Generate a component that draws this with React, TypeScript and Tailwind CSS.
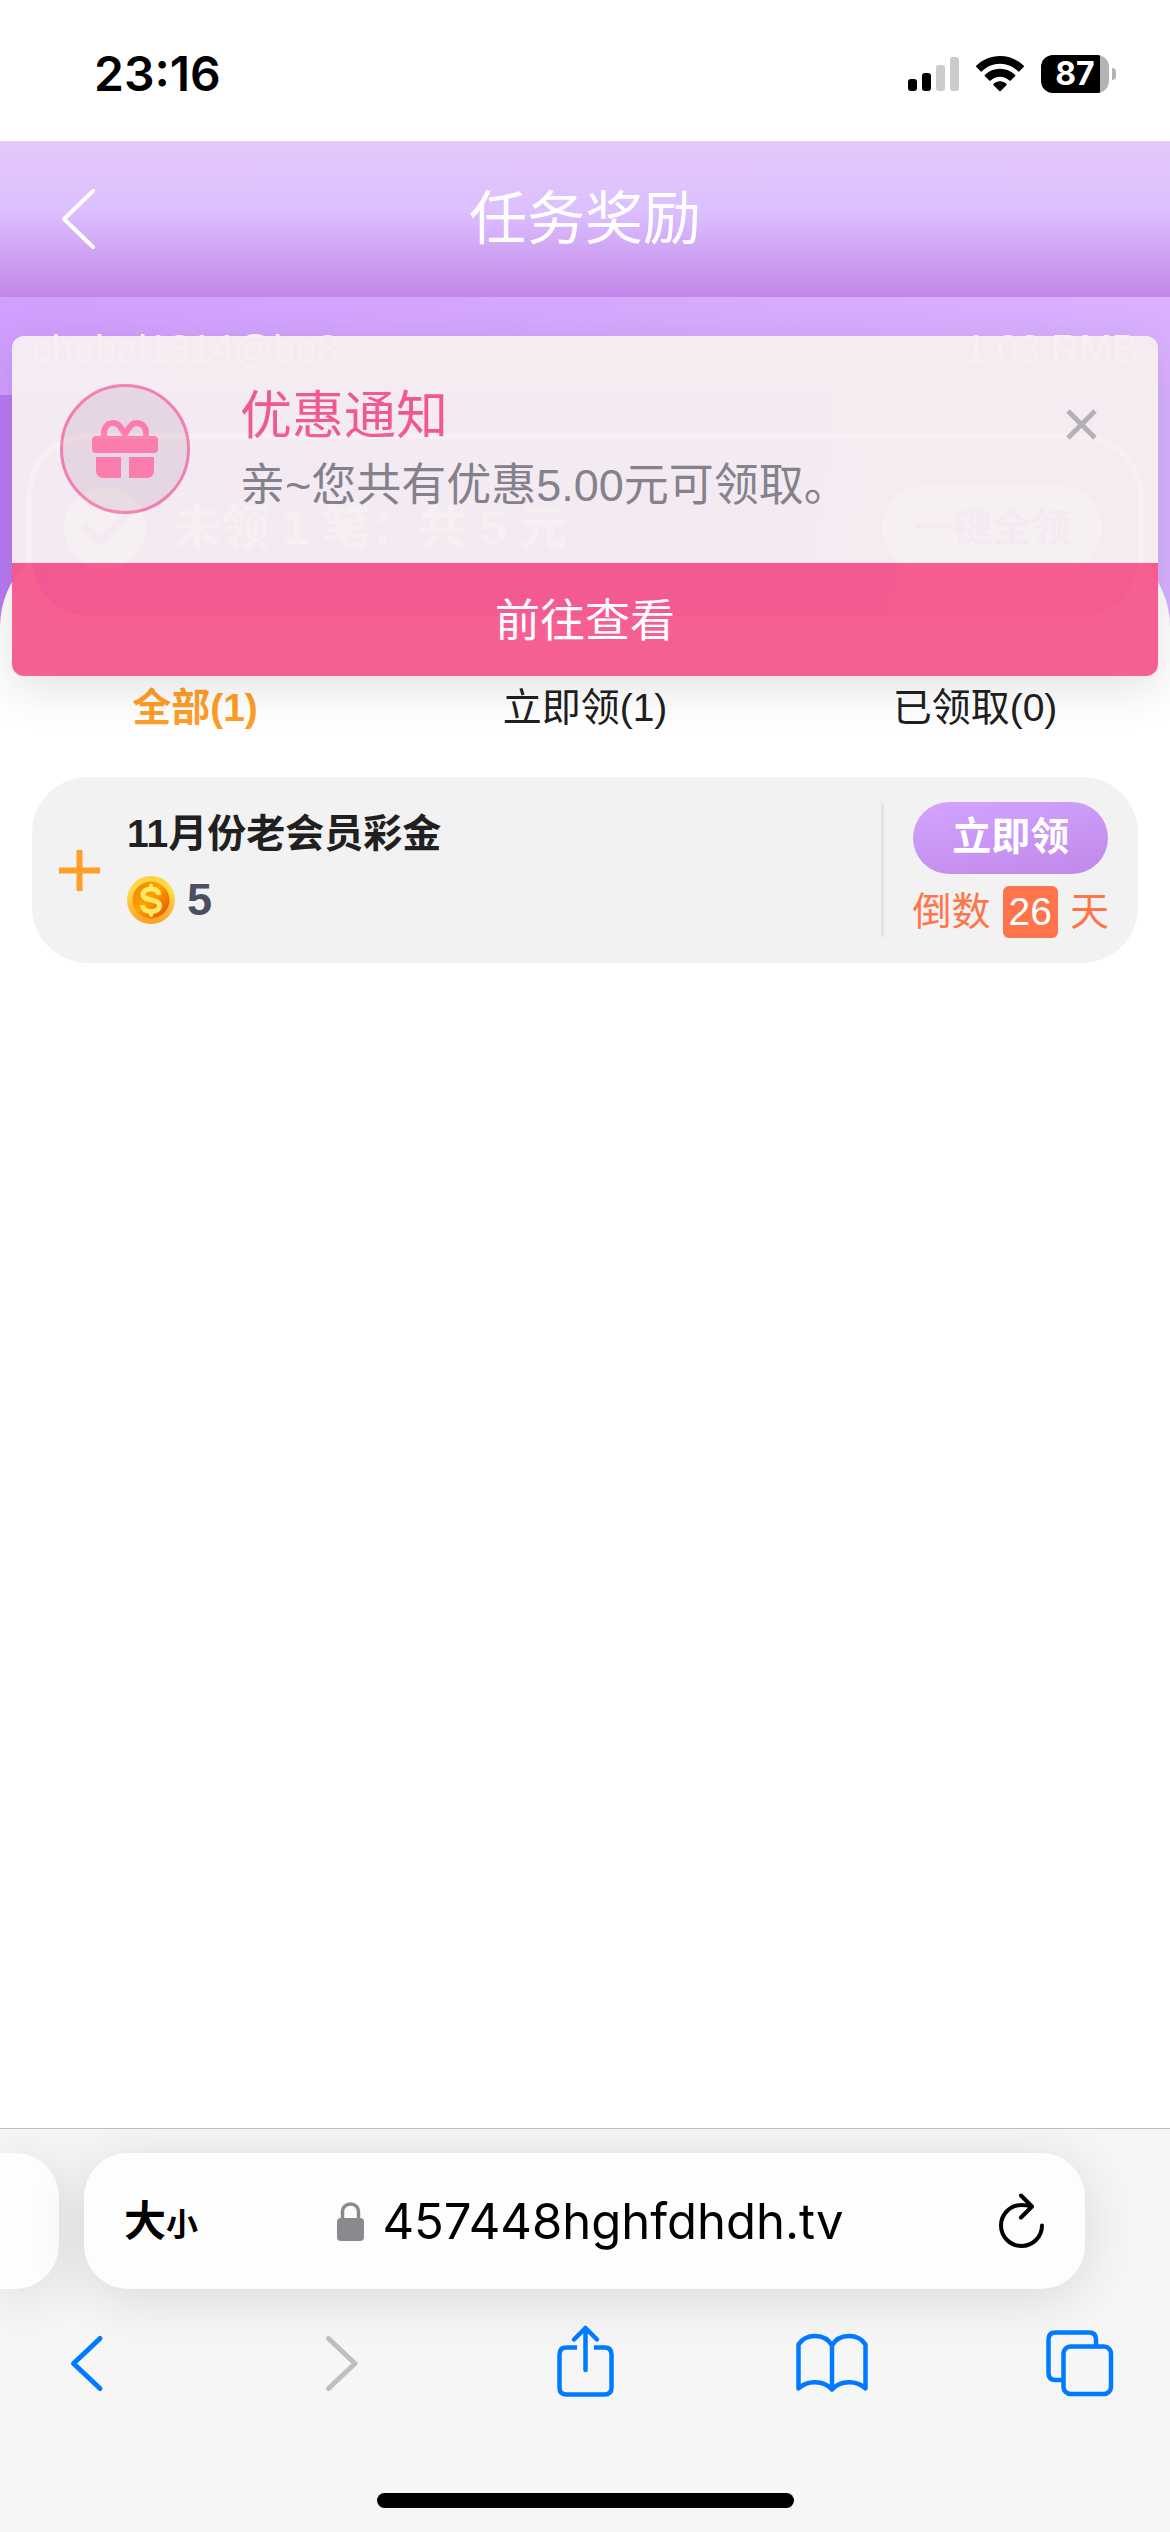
import { useState } from 'react'

type TabKey = 'all' | 'pending' | 'claimed'

const tabs: { key: TabKey; label: string }[] = [
  { key: 'all', label: '全部(1)' },
  { key: 'pending', label: '立即领(1)' },
  { key: 'claimed', label: '已领取(0)' },
]

const rewards = [{ id: 1, title: '11月份老会员彩金', amount: 5, daysLeft: 26, claimed: false }]

function StatusBar() {
  return (
    <div className="flex h-[141px] items-start justify-between bg-white pt-[46px] pr-[54px] pl-[94px]">
      <span className="font-[Inter,sans-serif] text-5xl leading-[56px] font-semibold text-black">23:16</span>
      <div className="flex h-14 items-center gap-[17px]">
        <svg width="51" height="36" viewBox="0 0 51 36" aria-hidden="true">
          <rect x="0" y="23" width="9" height="12" rx="3" />
          <rect x="14" y="17" width="9" height="18" rx="3" />
          <rect x="28" y="9" width="9" height="26" rx="3" fill="#cbcbcb" />
          <rect x="42" y="1" width="9" height="34" rx="3" fill="#cbcbcb" />
        </svg>
        <svg width="48" height="36" viewBox="0 0 48 36" aria-hidden="true">
          <path d="M24 0C14.800 0 6.500 3.600.4 9.600a1 1 0 0 0 0 1.500l4.200 4.200a1 1 0 0 0 1.400 0C10.700 10.700 17 7.800 24 7.800s13.300 2.900 18 7.500a1 1 0 0 0 1.400 0l4.200-4.200a1 1 0 0 0 0-1.500C41.500 3.600 33.200 0 24 0z" />
          <path d="M24 12.700c-5.800 0-11 2.300-15 6a1 1 0 0 0 0 1.500l4.300 4.200a1 1 0 0 0 1.400 0c2.400-2.300 5.700-3.700 9.300-3.700s6.900 1.400 9.300 3.700a1 1 0 0 0 1.400 0l4.300-4.200a1 1 0 0 0 0-1.500c-4-3.700-9.200-6-15-6z" />
          <path d="M24 25.300c-2.500 0-4.700.9-6.400 2.400a1 1 0 0 0 0 1.500l5.700 5.800a1 1 0 0 0 1.400 0l5.700-5.800a1 1 0 0 0 0-1.500c-1.700-1.500-3.900-2.400-6.400-2.400z" />
        </svg>
        <div className="flex items-center gap-[3px]">
          <span className="flex h-[38px] w-[68px] items-center justify-center rounded-xl bg-[linear-gradient(to_right,#000_87%,#b3b3b3_87%)] font-[Inter,sans-serif] text-[32px] leading-none font-bold text-white">
            87
          </span>
          <span className="h-3 w-1 rounded-r-full bg-[#b3b3b3]" />
        </div>
      </div>
    </div>
  )
}

function PageHeader() {
  return (
    <header className="grid h-[156px] grid-cols-[160px_1fr_160px] items-center bg-[linear-gradient(to_bottom,#e4c9fa,#dcbfff_45%,#c286e8)] text-white">
      <button type="button" aria-label="返回" className="flex h-full items-center pl-[61px]">
        <svg width="34" height="60" viewBox="0 0 34 60" fill="none" stroke="currentColor" strokeWidth="4" strokeLinecap="round" strokeLinejoin="round">
          <path d="M32 2 3 30l29 28" />
        </svg>
      </button>
      <h1 className="text-center text-[58px] leading-none">任务奖励</h1>
    </header>
  )
}

function ClaimAllCard() {
  return (
    <div className="relative z-10 mx-[26px] flex h-[189px] items-center justify-between rounded-[64px] border-6 border-white bg-[linear-gradient(100deg,#b97cf3,#d8b2ff)] pr-9 pl-8">
      <div className="flex items-center gap-[27px] text-white">
        <svg width="82" height="82" viewBox="0 0 82 82" aria-hidden="true">
          <circle cx="41" cy="41" r="41" fill="#fff" />
          <path d="M19 37l17 17 28-28" fill="none" stroke="#bd83f4" strokeWidth="7" />
        </svg>
        <p className="text-5xl leading-none font-bold">未领 1 笔：共 5 元</p>
      </div>
      <button type="button" className="h-[83px] w-[220px] rounded-full bg-white text-[39px] leading-none font-bold text-[#c08bf0]">
        一键全领
      </button>
    </div>
  )
}

function NoticeToast({ onClose }: { onClose: () => void }) {
  return (
    <section className="absolute inset-x-3 top-[39px] z-20 overflow-hidden rounded-xl opacity-95 shadow-[0_12px_48px_rgba(0,0,0,0.12)]">
      <div className="flex h-[227px] items-start bg-[#f7f0f2] pt-12 pr-[53px] pl-12">
        <div className="flex size-[130px] shrink-0 items-center justify-center rounded-full border-3 border-[#f57fae] bg-[#e9dae2] text-[#fe7dab]">
          <svg width="66" height="58" viewBox="0 0 66 58" fill="currentColor" aria-hidden="true">
            <path d="M12 17v-4c0-6 4-10 9-10 6 0 8 5 12 11 4-6 6-11 12-11 5 0 9 4 9 10v4" fill="none" stroke="currentColor" strokeWidth="6" />
            <rect x="0" y="16" width="66" height="17" rx="4" />
            <path d="M4 37h25v21H11a7 7 0 0 1-7-7z" />
            <path d="M37 37h25v14a7 7 0 0 1-7 7H37z" />
          </svg>
        </div>
        <div className="flex-1 pt-[2px] pl-[50px]">
          <h2 className="text-[52px] leading-[60px] text-[#f2568c]">优惠通知</h2>
          <p className="pt-2 text-[45px] leading-[64px] text-[#828187]">亲~您共有优惠5.00元可领取。</p>
        </div>
        <button type="button" aria-label="关闭" onClick={onClose} className="p-2 pt-[25px] text-[#b3b1b3]">
          <svg width="31" height="31" viewBox="0 0 31 31" stroke="currentColor" strokeWidth="5">
            <path d="M2 2l27 27M29 2 2 29" />
          </svg>
        </button>
      </div>
      <button type="button" className="block h-[113px] w-full bg-[#f5578c] pt-1 text-[45px] leading-none text-white">
        前往查看
      </button>
    </section>
  )
}

function Coin() {
  return (
    <svg width="48" height="48" viewBox="0 0 48 48" aria-hidden="true">
      <defs>
        <linearGradient id="rim" x1="0" y1="0" x2="0" y2="1">
          <stop offset="0" stopColor="#ffcf3a" />
          <stop offset=".3" stopColor="#ffdf4a" />
          <stop offset="1" stopColor="#ff9d28" />
        </linearGradient>
        <linearGradient id="face" x1=".1" y1=".2" x2=".9" y2=".9">
          <stop offset="0" stopColor="#f18c00" />
          <stop offset=".4" stopColor="#ffa300" />
          <stop offset="1" stopColor="#e65c00" />
        </linearGradient>
      </defs>
      <circle cx="24" cy="24" r="24" fill="url(#rim)" />
      <circle cx="24" cy="24" r="18.500" fill="url(#face)" />
      <path d="M32 19c-.5-4-3.500-6-8-6-4.700 0-8 2.200-8 5.600 0 7.400 16.500 3.200 16.500 11 0 3.600-3.500 5.900-8.200 5.900-5 0-8.300-2.300-8.800-6.500" fill="none" stroke="#ffe866" strokeWidth="5" />
      <path d="M24 9.500V13M24 35.500V39" fill="none" stroke="#ffe866" strokeWidth="4" strokeLinecap="round" />
    </svg>
  )
}

function RewardItem({ title, amount, daysLeft }: { title: string; amount: number; daysLeft: number }) {
  return (
    <li className="flex h-[186px] items-center rounded-[56px] bg-[#f2f2f2] pr-[29px] pl-[27px]">
      <button type="button" aria-label="展开" className="mr-[27px] text-[#ff9e28]">
        <svg width="41" height="41" viewBox="0 0 41 41" stroke="currentColor" strokeWidth="6">
          <path d="M0 20.500h41M20.500 0v41" />
        </svg>
      </button>
      <div className="flex-1 pb-2">
        <h3 className="text-[39px] leading-[56px] font-bold text-[#202020]">{title}</h3>
        <div className="flex items-center gap-3 pt-3">
          <Coin />
          <span className="text-[45px] leading-[52px] font-bold text-[#495061]">{amount}</span>
        </div>
      </div>
      <div className="flex items-center gap-[29px]">
        <span className="h-[134px] w-[3px] bg-[#e4e4e4]" />
        <div className="flex flex-col items-center gap-3">
          <button type="button" className="h-[72px] w-[195px] rounded-full bg-[linear-gradient(170deg,#d3a4ff,#c088ea)] pb-1 text-[39px] leading-none font-bold text-white">
            立即领
          </button>
          <p className="flex items-center gap-3 text-[39px] leading-[52px] whitespace-nowrap text-[#ff7549]">
            倒数
            <span className="rounded-md bg-[#ff744b] px-[6px] text-white">{daysLeft}</span>
            天
          </p>
        </div>
      </div>
    </li>
  )
}

function BrowserBar() {
  return (
    <footer className="relative z-10 mt-auto overflow-hidden border-t border-[#bdbdbd] bg-[#f6f6f6] pt-6">
      <div className="flex h-[136px] gap-[25px] pr-[85px]">
        <div className="w-[59px] rounded-r-[44px] bg-[#fdfdfd] shadow-[0_8px_56px_rgba(0,0,0,0.12)]" />
        <div className="flex flex-1 items-center rounded-[44px] bg-[#fdfdfd] px-10 font-[Inter,'Noto_Sans_CJK_SC',sans-serif] text-black shadow-[0_8px_56px_rgba(0,0,0,0.12)]">
          <button type="button" className="flex w-[76px] items-baseline leading-none font-bold whitespace-nowrap">
            <span className="text-[42px] leading-none">大</span>
            <span className="text-[32px] leading-none">小</span>
          </button>
          <button type="button" className="flex flex-1 items-center justify-center gap-[18px] pl-3">
            <svg width="27" height="39" viewBox="0 0 27 39" aria-hidden="true">
              <path d="M5.500 18v-7.500C5.500 5 9 2 13.500 2s8 3 8 8.500V18" fill="none" stroke="#8a898e" strokeWidth="3.500" />
              <rect x="0" y="16" width="27" height="23" rx="4" fill="#8a898e" />
            </svg>
            <span className="font-[Inter,sans-serif] text-[49px] leading-none">457448hghfdhdh.tv</span>
          </button>
          <button type="button" aria-label="刷新" className="flex w-[76px] justify-end">
            <svg width="46" height="56" viewBox="0 0 46 56" fill="none" stroke="currentColor" strokeWidth="4" strokeLinecap="round" strokeLinejoin="round">
              <path d="M43 32.500a20.500 20.500 0 1 1-20.500-20.500q5 0 10 1.500M22 2.500l11 11-11 11" />
            </svg>
          </button>
        </div>
      </div>
      <nav className="flex justify-between pt-[35px] pr-12 pl-[46px] text-[#007aff]">
        <button type="button" aria-label="后退">
          <svg width="80" height="80" viewBox="0 0 80 80" fill="none" stroke="currentColor" strokeWidth="5" strokeLinecap="round" strokeLinejoin="round">
            <path d="M54 14.500 27.500 39.500l26.500 25" />
          </svg>
        </button>
        <button type="button" aria-label="前进" className="text-[#bfbfbf]">
          <svg width="80" height="80" viewBox="0 0 80 80" fill="none" stroke="currentColor" strokeWidth="5" strokeLinecap="round" strokeLinejoin="round">
            <path d="M33.500 14.500 60 39.500l-26.500 25" />
          </svg>
        </button>
        <button type="button" aria-label="分享">
          <svg width="80" height="80" viewBox="0 0 80 80" fill="none" stroke="currentColor" strokeWidth="4.500">
            <path d="M33 23.500H22.500q-7 0-7 7v33q0 7 7 7h38q7 0 7-7v-33q0-7-7-7H50" />
            <path d="M41.500 46V4M30 15.500 41.500 4 53 15.500" strokeLinecap="round" strokeLinejoin="round" />
          </svg>
        </button>
        <button type="button" aria-label="书签">
          <svg width="80" height="80" viewBox="0 0 80 80" fill="none" stroke="currentColor" strokeWidth="4.500" strokeLinejoin="round">
            <path d="M39 21.500C32 9 13 9 5.500 20.500V64.500C14 56 31 56 39 65.500 47 56 64 56 72.500 64.500V20.500C65 9 46 9 39 21.500zM39 21.500v44" />
          </svg>
        </button>
        <button type="button" aria-label="标签页">
          <svg width="80" height="80" viewBox="0 0 80 80" fill="none" stroke="currentColor" strokeWidth="4.500">
            <rect x="21.500" y="22.500" width="47.500" height="47.500" rx="7" />
            <path d="M21.500 56H13.500q-7 0-7-7V15.500q0-7 7-7H47q7 0 7 7v7" />
          </svg>
        </button>
      </nav>
      <div className="flex justify-center pt-[89px] pb-6">
        <span className="h-[15px] w-[417px] rounded-full bg-black" />
      </div>
    </footer>
  )
}

export default function App() {
  const [tab, setTab] = useState<TabKey>('all')
  const [showNotice, setShowNotice] = useState(true)

  const visible = rewards.filter((r) => tab === 'all' || (tab === 'claimed') === r.claimed)

  return (
    <div className="flex min-h-screen flex-col bg-white font-['Liberation_Sans','Noto_Sans_CJK_SC',sans-serif]">
      <StatusBar />
      <PageHeader />

      <main className="relative bg-[linear-gradient(to_right,#b97bf5,#d9b2ff)]">
        {showNotice && <NoticeToast onClose={() => setShowNotice(false)} />}

        {/* Account strip */}
        <div className="flex h-[98px] items-center justify-between bg-[linear-gradient(to_right,#d19fff,#dab1ff)] px-8 pt-1 text-[39px] leading-none text-white">
          <span>chubai1314@bo8</span>
          <span>1.03 RMB</span>
        </div>

        <div className="pt-[38px]">
          <ClaimAllCard />
        </div>

        {/* Reward list sheet, tucked under the card */}
        <div className="-mt-[85px] rounded-t-[90px] bg-white px-8 pt-[140px]">
          <div role="tablist" className="-mx-8 grid grid-cols-3">
            {tabs.map(({ key, label }) => (
              <button
                key={key}
                type="button"
                role="tab"
                aria-selected={tab === key}
                onClick={() => setTab(key)}
                className={`h-16 pb-1 text-[39px] leading-none ${
                  tab === key ? 'font-bold text-[#ff9e28]' : 'text-[#202020]'
                }`}
              >
                {label}
              </button>
            ))}
          </div>
          <ul className="flex flex-col gap-6 pt-9">
            {visible.map((r) => (
              <RewardItem key={r.id} title={r.title} amount={r.amount} daysLeft={r.daysLeft} />
            ))}
          </ul>
        </div>
      </main>

      <BrowserBar />
    </div>
  )
}
